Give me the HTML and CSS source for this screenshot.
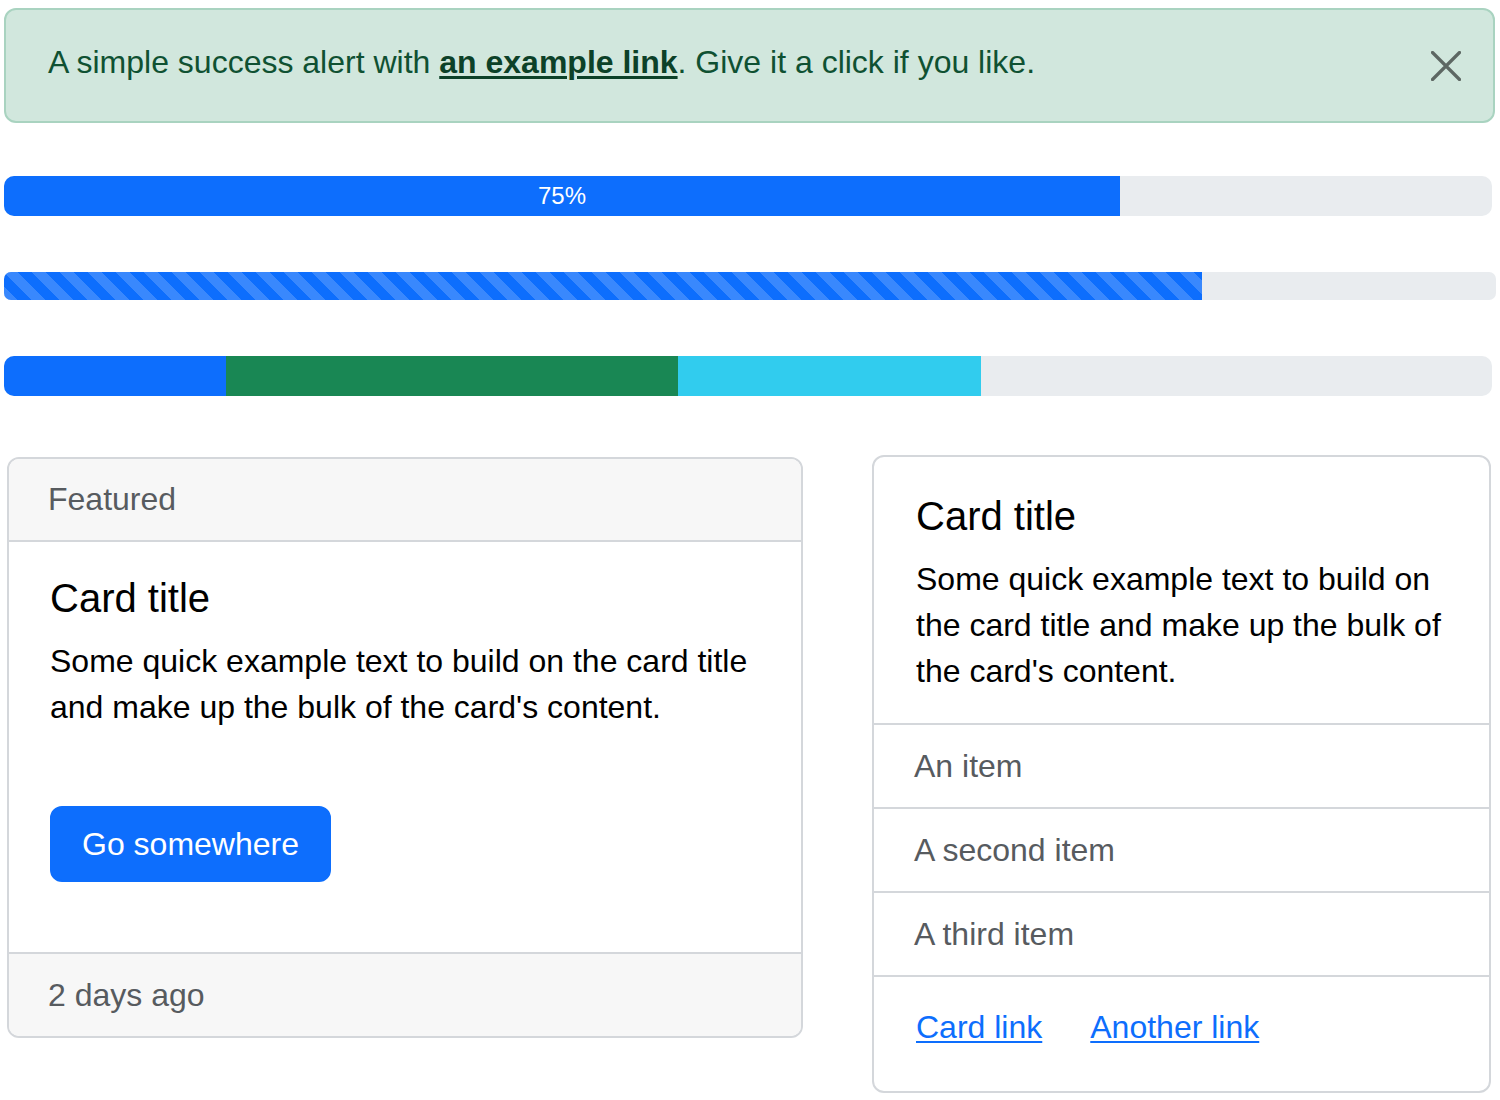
FILE: index.html
```html
<!DOCTYPE html>
<html lang="en">
<head>
<meta charset="utf-8">
<title>Components</title>
<link rel="stylesheet" href="styles.css">
</head>
<body>
<div class="page">
  <div class="alert">
    <div class="alert-text">A simple success alert with <a href="#" class="alert-link">an example link</a>. Give it a click if you like.</div>
    <button class="btn-close" type="button" aria-label="Close">
      <svg width="30" height="30" viewBox="0 0 30 30"><path d="M1.5 1.5 L28.5 28.5 M28.5 1.5 L1.5 28.5" stroke="#000" stroke-width="3.2" stroke-linecap="round" fill="none"/></svg>
    </button>
  </div>

  <div class="progress p-label">
    <div class="bar bar-blue" style="width: 75%">75%</div>
  </div>

  <div class="progress p-striped">
    <div class="bar bar-blue striped" style="width: 80.3%"></div>
  </div>

  <div class="progress p-multi">
    <div class="bar bar-blue" style="width: 14.9%"></div>
    <div class="bar bar-green" style="width: 30.4%"></div>
    <div class="bar bar-cyan" style="width: 20.35%"></div>
  </div>

  <div class="cards">
    <div class="card card-left">
      <div class="card-header">Featured</div>
      <div class="card-body body-left">
        <h5 class="card-title">Card title</h5>
        <p class="card-text">Some quick example text to build on the card title and make up the bulk of the card's content.</p>
        <a href="#" class="btn">Go somewhere</a>
      </div>
      <div class="card-footer">2 days ago</div>
    </div>

    <div class="card card-right">
      <div class="card-body body-right">
        <h5 class="card-title">Card title</h5>
        <p class="card-text last">Some quick example text to build on the card title and make up the bulk of the card's content.</p>
      </div>
      <ul class="list">
        <li class="list-item">An item</li>
        <li class="list-item">A second item</li>
        <li class="list-item">A third item</li>
      </ul>
      <div class="card-links"><a href="#" class="card-link">Card link</a><a href="#" class="card-link second">Another link</a></div>
    </div>
  </div>
</div>
</body>
</html>
```

FILE: styles.css
```css
* { box-sizing: border-box; }

html, body {
  margin: 0;
  padding: 0;
  background: #fff;
}

body {
  font-family: "Liberation Sans", Arial, Helvetica, sans-serif;
  font-size: 32px;
  line-height: 46px;
  color: #000;
}

.page {
  padding: 8px 0 0 4px;
  width: 1500px;
}

/* Alert */
.alert {
  display: flex;
  align-items: flex-start;
  width: 1491px;
  padding: 29px 32px 36px 42px;
  background: #d1e7dd;
  border: 2px solid #a9d3c0;
  border-radius: 12px;
  color: #0f5132;
}

.alert-text { flex: 1; }

.alert-link {
  color: #0c4128;
  font-weight: bold;
  text-decoration: underline;
  text-underline-offset: 3px;
  text-decoration-thickness: 3px;
}

.btn-close {
  width: 30px;
  height: 30px;
  margin-top: 12px;
  padding: 0;
  border: 0;
  background: transparent;
  opacity: 0.55;
  display: block;
}
.btn-close svg { display: block; }

/* Progress */
.progress {
  display: flex;
  overflow: hidden;
  background: #e9ecef;
}

.p-label {
  margin-top: 53px;
  width: 1488px;
  height: 40px;
  border-radius: 10px;
}

.p-striped {
  margin-top: 56px;
  width: 1492px;
  height: 28px;
  border-radius: 7px;
}

.p-multi {
  margin-top: 56px;
  width: 1488px;
  height: 40px;
  border-radius: 10px;
}

.bar {
  height: 100%;
  display: flex;
  align-items: center;
  justify-content: center;
  color: #fff;
  font-size: 24px;
  line-height: 40px;
}

.bar-blue { background-color: #0d6efd; }
.bar-green { background-color: #198754; }
.bar-cyan { background-color: #31ccee; }

.striped {
  background-image: linear-gradient(45deg,
    rgba(255,255,255,.18) 25%, transparent 25%,
    transparent 50%, rgba(255,255,255,.18) 50%,
    rgba(255,255,255,.18) 75%, transparent 75%, transparent);
  background-size: 28px 28px;
}

/* Cards */
.cards {
  display: flex;
  align-items: flex-start;
  gap: 70px;
  margin-top: 59px;
  padding-left: 3px;
}

.card {
  border: 2px solid #d4d7db;
  border-radius: 12px;
  overflow: hidden;
  background: #fff;
}

.card-left {
  width: 796px;
  margin-top: 2px;
}

.card-right {
  width: 619px;
  margin-left: -1px;
}

.card-header {
  padding: 17px 39px 18px 39px;
  background: #f7f7f7;
  border-bottom: 2px solid #d4d7db;
  color: #575b5f;
}

.card-footer {
  padding: 18px 39px 18px 39px;
  background: #f7f7f7;
  border-top: 2px solid #d4d7db;
  color: #575b5f;
}

.card-body { padding: 0 41px; }

.body-left {
  padding-top: 32px;
  padding-bottom: 70px;
}

.body-right {
  padding-top: 35px;
  padding-bottom: 29px;
  padding-left: 42px;
}

.card-title {
  margin: 0 0 16px 0;
  font-size: 40px;
  line-height: 48px;
  font-weight: normal;
}

.card-text {
  margin: 0 0 76px 0;
}
.card-text.last { margin-bottom: 0; }

.btn {
  display: inline-block;
  padding: 13px 30px;
  border: 2px solid #0d6efd;
  border-radius: 12px;
  background: #0d6efd;
  color: #fff;
  text-decoration: none;
  vertical-align: top;
}

.list {
  list-style: none;
  margin: 0;
  padding: 0;
  border-top: 2px solid #d4d7db;
}

.list-item {
  padding: 18px 40px;
  border-bottom: 2px solid #d4d7db;
  color: #575b5f;
}

.card-links {
  padding: 27px 40px 41px 42px;
}

.card-link {
  color: #0d6efd;
  text-decoration: underline;
  text-underline-offset: 3px;
  text-decoration-thickness: 2px;
}

.card-link.second { margin-left: 48px; }
```
